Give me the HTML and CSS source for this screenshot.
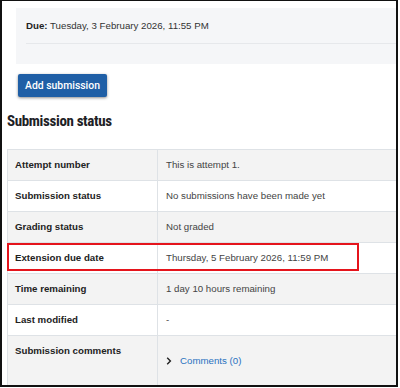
FILE: index.html
```html
<!doctype html>
<html>
  <head>
    <meta charset="utf-8">
    <title>Assignment submission status</title>
    <link rel="stylesheet" href="styles.css">
  </head>
  <body>
    <div class="frame">
      <div class="dates">
        <div class="due"><strong>Due:</strong> Tuesday, 3 February 2026, 11:55 PM</div>
        <div class="divider"></div>
      </div>
      <button class="btn-primary">Add submission</button>
      <h2 class="section-title">Submission status</h2>
      <div class="status">
        <table class="status-table">
          <tr class="odd">
            <th>Attempt number</th>
            <td>This is attempt 1.</td>
          </tr>
          <tr>
            <th>Submission status</th>
            <td>No submissions have been made yet</td>
          </tr>
          <tr class="odd">
            <th>Grading status</th>
            <td>Not graded</td>
          </tr>
          <tr>
            <th>Extension due date</th>
            <td>Thursday, 5 February 2026, 11:59 PM</td>
          </tr>
          <tr class="odd">
            <th>Time remaining</th>
            <td>1 day 10 hours remaining</td>
          </tr>
          <tr>
            <th>Last modified</th>
            <td>-</td>
          </tr>
          <tr class="odd comments-row">
            <th>Submission comments</th>
            <td>
              <a class="comments-link" href="#">
                <svg class="chevron" width="6" height="8" viewBox="0 0 6 8"><path d="M1.2 0.8 L4.4 4 L1.2 7.2" fill="none" stroke="#222" stroke-width="1.4"/></svg>
                Comments (0)
              </a>
            </td>
          </tr>
        </table>
        <div class="highlight"></div>
      </div>
    </div>
  </body>
</html>
```

FILE: styles.css
```css
body {
  margin: 0;
  background: white;
  font: 9.7px/12px "Liberation Sans", Arial, sans-serif;
  color: #333;
}

.frame {
  box-sizing: border-box;
  width: 398px;
  height: 387px;
  border: 2px solid #111;
  border-top-width: 1px;
  overflow: hidden;
}

.dates {
  margin: 7px -20px 0 14px;
  padding-left: 10px;
  height: 56px;
  background: #f5f6f8;
}

.due {
  padding: 12px 0 11px;
  color: #333;
}

.due strong {
  color: #222;
}

.divider {
  height: 1px;
  background: #e6e8eb;
}

.btn-primary {
  display: block;
  margin: 10px 0 0 16px;
  width: 89px;
  height: 23px;
  padding: 0;
  border: 0;
  border-radius: 2px;
  background: #1f5fa6;
  color: white;
  font: 500 10.4px/23px Roboto, sans-serif;
  box-shadow: 0 1px 3px rgba(0, 0, 0, 0.45);
}

.section-title {
  margin: 15px 0 0 5px;
  font: 700 15px/18px Roboto, sans-serif;
  font-stretch: 80%;
  letter-spacing: -0.35px;
  color: #1d2125;
}

.status {
  position: relative;
  margin: 19px -30px 0 5px;
}

.status-table {
  border-collapse: collapse;
  width: 100%;
  border-left: 1px solid #dee2e6;
}

.status-table th,
.status-table td {
  height: 30px;
  padding: 0 8px 0 7px;
  border-top: 1px solid #dee2e6;
  text-align: left;
  vertical-align: middle;
}

.status-table th {
  width: 134px;
  font-weight: bold;
  color: #222;
}

.status-table td {
  border-left: 1px solid #dee2e6;
  padding-left: 8px;
  color: #444;
}

.status-table tr.odd {
  background: #f3f3f3;
}

.comments-row th {
  height: 41px;
  vertical-align: top;
  padding-top: 9px;
}

.comments-link {
  display: inline-flex;
  align-items: center;
  gap: 8px;
  color: #2a72bf;
  text-decoration: none;
}

.highlight {
  position: absolute;
  top: 94px;
  left: 0;
  width: 352px;
  height: 28px;
  box-sizing: border-box;
  border: 2px solid #e5141c;
}
```
